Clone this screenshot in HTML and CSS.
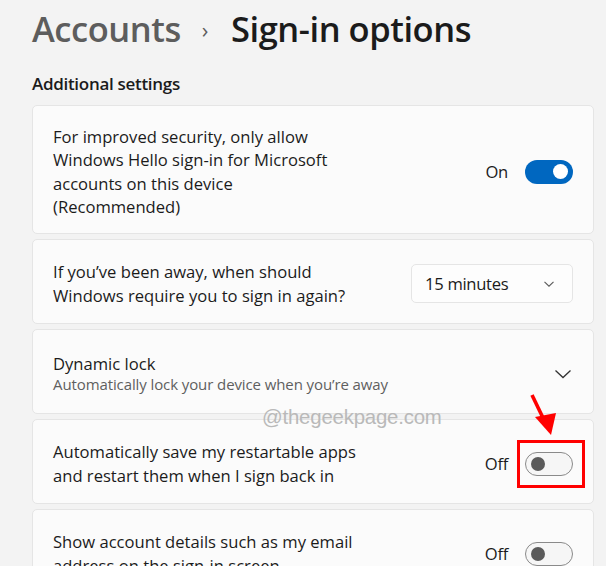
FILE: index.html
```html
<!DOCTYPE html>
<html lang="en">
<head>
<meta charset="utf-8">
<title>Sign-in options</title>
<link rel="stylesheet" href="styles.css">
</head>
<body>
<main class="page">
  <h1 class="crumbs"><span class="parent">Accounts</span><span class="sep">›</span><span class="current">Sign-in options</span></h1>
  <h2 class="section">Additional settings</h2>
  <div class="cards">
    <div class="card card-tall">
      <div class="label">For improved security, only allow<br>Windows Hello sign-in for Microsoft<br>accounts on this device<br>(Recommended)</div>
      <div class="control"><span class="state">On</span><span class="toggle on"><span class="knob"></span></span></div>
    </div>
    <div class="card">
      <div class="label">If you’ve been away, when should<br>Windows require you to sign in again?</div>
      <div class="control"><div class="dropdown"><span>15 minutes</span><svg class="chev-small" width="12" height="8" viewBox="0 0 12 8"><path d="M1.5 1.8 L6 6.2 L10.5 1.8" fill="none" stroke="#5a5a5a" stroke-width="1.1"/></svg></div></div>
    </div>
    <div class="card">
      <div class="label"><div class="title">Dynamic lock</div><div class="sub">Automatically lock your device when you’re away</div></div>
      <div class="control"><svg class="expand" width="18" height="10" viewBox="0 0 18 10"><path d="M1.5 1.5 L9 8.5 L16.5 1.5" fill="none" stroke="#333" stroke-width="1.3"/></svg></div>
    </div>
    <div class="card card-mark">
      <div class="label">Automatically save my restartable apps<br>and restart them when I sign back in</div>
      <div class="control"><span class="state">Off</span><span class="toggle off"><span class="knob"></span></span></div>
      <span class="highlight"></span>
    </div>
    <div class="card">
      <div class="label">Show account details such as my email<br>address on the sign-in screen</div>
      <div class="control"><span class="state">Off</span><span class="toggle off"><span class="knob"></span></span></div>
    </div>
  </div>
  <div class="watermark">@thegeekpage.com</div>
  <svg class="arrow" width="34" height="48" viewBox="0 0 34 48"><path d="M4 3 L17 30" stroke="#ff0000" stroke-width="3.6" fill="none"/><path d="M7 25 L28 21 L23 43 Z" fill="#ff0000"/></svg>
</main>
</body>
</html>
```
FILE: styles.css
```css
* { box-sizing: border-box; }
html, body { margin: 0; padding: 0; }
body {
  background: #f3f3f3;
  font-family: "Segoe UI", "Open Sans", "Noto Sans", sans-serif;
  color: #1b1b1b;
  width: 606px;
  height: 566px;
  overflow: hidden;
}
.page { position: relative; padding: 0 12px 0 32px; }
.crumbs {
  margin: 0;
  padding-top: 5px;
  height: 62px;
  font-size: 34.5px;
  font-weight: 600;
  line-height: 48px;
  letter-spacing: -0.45px;
  display: flex;
  align-items: baseline;
}
.parent { color: #5d5d5d; }
.sep { color: #5d5d5d; font-size: 22px; font-weight: 400; margin: 0 23px 0 21px; position: relative; top: -4px; }
.current { color: #1b1b1b; }
.section {
  margin: 0;
  font-size: 17px;
  font-weight: 600;
  line-height: 22px;
  height: 43px;
  padding-top: 11px;
  letter-spacing: -0.3px;
}
.cards { display: flex; flex-direction: column; gap: 5px; }
.card {
  background: #fbfbfb;
  border: 1px solid #e5e5e5;
  border-radius: 5px;
  height: 85px;
  padding: 4px 20px 0 20px;
  display: flex;
  align-items: center;
  justify-content: space-between;
  position: relative;
}
.card-tall { height: 129px; }
.label { font-size: 16.6px; line-height: 23.4px; letter-spacing: 0; color: #1b1b1b; }
.title { font-size: 16.6px; line-height: 21px; }
.sub { font-size: 15px; line-height: 20px; color: #5f5f5f; letter-spacing: -0.1px; }
.control { display: flex; align-items: center; }
.state { font-size: 16.6px; margin-right: 17px; letter-spacing: -0.3px; }
.toggle {
  width: 48px; height: 24px; border-radius: 12px;
  display: flex; align-items: center;
  position: relative;
}
.toggle.on { background: #0067c0; justify-content: flex-end; padding-right: 5px; }
.toggle.on .knob { width: 15px; height: 15px; border-radius: 50%; background: #fff; }
.toggle.off { background: #f6f6f6; border: 1px solid #8a8a8a; padding-left: 5px; }
.toggle.off .knob { width: 14px; height: 14px; border-radius: 50%; background: #5b5b5b; }
.dropdown {
  width: 162px; height: 39px;
  background: #fdfdfd;
  border: 1px solid #e5e5e5;
  border-radius: 5px;
  display: flex; align-items: center; justify-content: space-between;
  padding: 0 17px 0 13px;
  font-size: 16.6px; letter-spacing: -0.3px;
}
.expand { margin-right: 1px; }
.highlight {
  position: absolute;
  left: 484px; top: 20px;
  width: 68px; height: 48px;
  border: 3px solid #ff0000;
}
.watermark {
  position: absolute;
  left: 262px; top: 406px;
  font-family: "Liberation Sans", Arial, sans-serif;
  font-size: 20.4px;
  color: #b9b9b9;
  letter-spacing: -0.2px;
}
.arrow { position: absolute; left: 528px; top: 392px; }
```
